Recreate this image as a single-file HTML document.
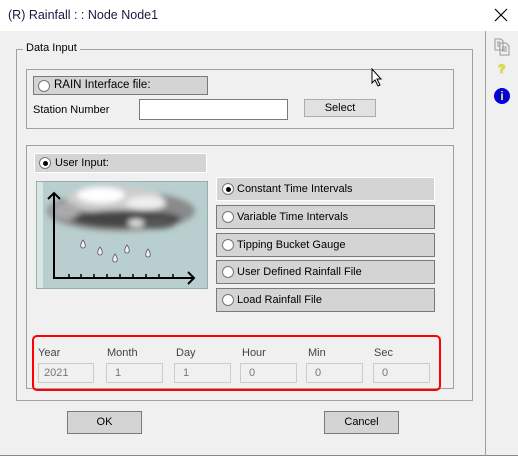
<!DOCTYPE html>
<html><head><style>
*{box-sizing:border-box;margin:0;padding:0}
body{width:518px;height:456px;background:#f0f0f0;font-family:"Liberation Sans",sans-serif;font-size:11px;color:#000;position:relative;overflow:hidden}
.a{position:absolute}
.title{left:0;top:0;width:518px;height:31px;background:#fff}
.grp{border:1px solid #a0a0a0}
.btn{background:#e1e1e1;border:1px solid #adadad}
.opt{background:#d4d4d4;border:1px solid #7a7a7a;height:24px;width:219px;left:216px;padding-left:20px;line-height:22px}
.rad{position:absolute;left:5px;top:5px;width:12px;height:12px;border-radius:50%;background:#fff;border:1px solid #777}
.rad.on::after{content:"";position:absolute;left:2.5px;top:2.5px;width:5px;height:5px;border-radius:50%;background:#000}
.lbl{color:#444;top:347px}
.inp{top:363px;height:20px;border:1px solid #ccc;background:#f0f0f0;color:#777;padding-left:8px;line-height:18px}
</style></head><body>
<div class="a title"></div>
<div class="a" style="left:8px;top:8px;font-size:12.5px;color:#1a1a40">(R) Rainfall : : Node Node1</div>
<svg class="a" style="left:494px;top:8px" width="14" height="14"><path d="M1 1L13 13M13 1L1 13" stroke="#000" stroke-width="1.2"/></svg>
<div class="a" style="left:0;top:455px;width:518px;height:1px;background:#888"></div>
<div class="a" style="left:485px;top:31px;width:1px;height:425px;background:#a0a0a0"></div>
<svg class="a" style="left:494px;top:38px" width="16" height="18"><path d="M1 1h6l2 2v9H1z M6 5h6l3 3v9H6z" fill="#f0f0f0" stroke="#999"/><path d="M3 4h3M3 6h3M3 8h3M8 9h5M8 11h5M8 13h5" stroke="#999"/></svg>
<div class="a" style="left:498px;top:62px;color:#e8e800;font-weight:bold;font-size:12px;text-shadow:0 0 1px #550">?</div>
<div class="a" style="left:494px;top:88px;width:16px;height:16px;border-radius:50%;background:#0000e0;color:#ff0;font-weight:bold;text-align:center;line-height:16px;font-size:12px">i</div>

<div class="a grp" style="left:16px;top:49px;width:457px;height:352px"></div>
<div class="a" style="left:23px;top:42px;background:#f0f0f0;padding:0 3px">Data Input</div>

<div class="a grp" style="left:26px;top:69px;width:428px;height:60px"></div>
<div class="a opt" style="left:33px;top:76px;width:175px;height:19px;line-height:17px;font-size:11.5px">RAIN Interface file:<span class="rad" style="top:3px;left:4px"></span></div>
<div class="a" style="left:33px;top:104px">Station Number</div>
<div class="a" style="left:139px;top:99px;width:149px;height:21px;background:#fff;border:1px solid #7a7a7a"></div>
<div class="a btn" style="left:304px;top:99px;width:72px;height:18px;text-align:center;line-height:16px">Select</div>

<div class="a grp" style="left:26px;top:145px;width:428px;height:244px"></div>
<div class="a" style="left:34px;top:153px;width:173px;height:20px;background:#d4d4d4;border:1px solid #fff;padding-left:20px;line-height:18px">User Input:<span class="rad on" style="top:3px;left:4px"></span></div>

<svg class="a" style="left:36px;top:181px" width="172" height="108">
<defs><filter id="b"><feGaussianBlur stdDeviation="3"/></filter></defs>
<rect width="172" height="108" fill="#b9cece" stroke="#7a8c8c"/>
<rect x="1" y="1" width="6" height="106" fill="#d8e6e6"/>
<g filter="url(#b)">
<ellipse cx="85" cy="30" rx="74" ry="20" fill="#8a8a8a"/>
<ellipse cx="78" cy="18" rx="48" ry="14" fill="#ccc"/>
<ellipse cx="65" cy="14" rx="24" ry="8" fill="#fff"/>
<ellipse cx="110" cy="22" rx="20" ry="7" fill="#eee"/>
<ellipse cx="90" cy="38" rx="55" ry="9" fill="#444"/>
<ellipse cx="120" cy="42" rx="20" ry="6" fill="#555"/>
<ellipse cx="30" cy="30" rx="14" ry="8" fill="#aaa"/>
<ellipse cx="100" cy="42" rx="8" ry="4" fill="#ddd"/>
</g>
<g fill="#eef" stroke="#555" stroke-width="0.8">
<path d="M47 59c-3 4-3 8 0 8s3-4 0-8z"/><path d="M64 66c-3 4-3 8 0 8s3-4 0-8z"/><path d="M79 73c-3 4-3 8 0 8s3-4 0-8z"/><path d="M91 64c-3 4-3 8 0 8s3-4 0-8z"/><path d="M112 68c-3 4-3 8 0 8s3-4 0-8z"/></g>
<path d="M18 12V97H158M12 18l6-6 6 6M152 91l6 6-6 6" fill="none" stroke="#000" stroke-width="2"/>
<path d="M33 97v-4M45 97v-4M58 97v-4M71 97v-4M84 97v-4M97 97v-4M110 97v-4M123 97v-4M137 97v-4" stroke="#000" stroke-width="1.5"/>
</svg>

<div class="a opt" style="top:177px;border-color:#fff">Constant Time Intervals<span class="rad on"></span></div>
<div class="a opt" style="top:205px">Variable Time Intervals<span class="rad"></span></div>
<div class="a opt" style="top:233px">Tipping Bucket Gauge<span class="rad"></span></div>
<div class="a opt" style="top:260px">User Defined Rainfall File<span class="rad"></span></div>
<div class="a opt" style="top:288px">Load Rainfall File<span class="rad"></span></div>

<div class="a" style="left:32px;top:335px;width:409px;height:56px;border:2.5px solid #f00;border-radius:5px"></div>
<div class="a lbl" style="left:38px">Year</div>
<div class="a lbl" style="left:107px">Month</div>
<div class="a lbl" style="left:176px">Day</div>
<div class="a lbl" style="left:242px">Hour</div>
<div class="a lbl" style="left:308px">Min</div>
<div class="a lbl" style="left:374px">Sec</div>
<div class="a inp" style="left:38px;width:56px;padding-left:5px">2021</div>
<div class="a inp" style="left:106px;width:57px">1</div>
<div class="a inp" style="left:174px;width:57px">1</div>
<div class="a inp" style="left:240px;width:57px">0</div>
<div class="a inp" style="left:306px;width:57px">0</div>
<div class="a inp" style="left:373px;width:57px">0</div>

<div class="a btn" style="left:67px;top:411px;width:75px;height:23px;background:#d4d4d4;border-color:#7a7a7a;text-align:center;line-height:21px">OK</div>
<div class="a btn" style="left:324px;top:411px;width:75px;height:23px;background:#d4d4d4;border-color:#7a7a7a;text-align:center;line-height:21px">Cancel</div>
<svg class="a" style="left:371px;top:68px" width="14" height="20"><path d="M1 1v14l3-3 3 6 2-1-3-6h4z" fill="#fff" stroke="#000"/></svg>
</body></html>
